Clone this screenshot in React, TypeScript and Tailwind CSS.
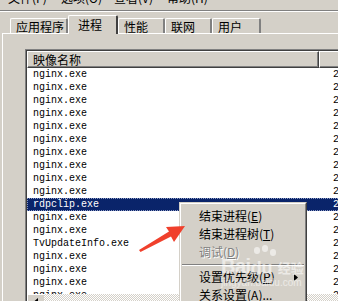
import React from 'react';

const ROWS = [
  'nginx.exe', 'nginx.exe', 'nginx.exe', 'nginx.exe', 'nginx.exe',
  'nginx.exe', 'nginx.exe', 'nginx.exe', 'nginx.exe', 'nginx.exe',
  'rdpclip.exe', 'nginx.exe', 'nginx.exe', 'TvUpdateInfo.exe',
  'nginx.exe', 'nginx.exe', 'nginx.exe', 'nginx.exe',
];

const PIDS = ['2748', '2836', '2904', '2212', '2380', '2456', '2520', '2612', '2688', '2764', '2096', '2840', '2916', '2188', '2264', '2340', '2412', '2496'];

const MENU = ['文件(F)', '选项(O)', '查看(V)', '帮助(H)'];

const TABS = [
  { label: '应用程序', w: 'w-[58px]' },
  { label: '进程', w: 'w-[50px]', active: true },
  { label: '性能', w: 'w-[47px]' },
  { label: '联网', w: 'w-[47px]' },
  { label: '用户', w: 'w-[49px]' },
];

function MenuItem({ text, mn, rest, disabled, sub }: { text: string; mn: string; rest?: string; disabled?: boolean; sub?: boolean }) {
  return (
    <div className={`h-[18px] flex items-center justify-between pl-[18px] pr-[7px] leading-[18px] ${disabled ? 'text-[#808080] [text-shadow:1px_1px_0_#fff]' : 'text-black'}`}>
      <span>
        {text}(<span className="underline underline-offset-1">{mn}</span>){rest}
      </span>
      {sub && (
        <svg width="4" height="7" viewBox="0 0 4 7">
          <path d="M0 0L4 3.5L0 7Z" fill="#000" />
        </svg>
      )}
    </div>
  );
}

export default function App() {
  return (
    <div className="w-[338px] h-[301px] overflow-hidden bg-[#d4d0c8] relative font-['Noto_Sans_CJK_SC','Noto_Sans',sans-serif] text-[12px] text-black">
      {/* menu bar, cut at the top */}
      <div className="h-[10px] overflow-hidden">
        <div className="flex pl-[8px] -mt-[8px] leading-[12px]">
          {MENU.map(m => (
            <span key={m} className="w-[53px] shrink-0">{m}</span>
          ))}
        </div>
      </div>
      <div className="border-t border-[#808080]" />
      <div className="border-t border-white" />

      {/* tabs */}
      <div className="h-[21px] flex items-end pl-[10px]">
        {TABS.map(t =>
          t.active ? (
            <div
              key={t.label}
              className={`${t.w} h-[19px] -mb-px relative z-10 bg-[#d4d0c8] border-t border-l border-white border-r-2 border-r-[#404040] rounded-t-[2px] pl-[9px] leading-[15px] pt-[1px] shrink-0`}
            >
              {t.label}
            </div>
          ) : (
            <div
              key={t.label}
              className={`${t.w} h-[15px] border-t border-l border-white border-r-2 border-r-[#808080] rounded-t-[2px] pl-[5px] leading-[16px] shrink-0`}
            >
              {t.label}
            </div>
          ),
        )}
      </div>

      {/* tab panel */}
      <div className="ml-[2px] border-t border-l border-white pl-[22px] pt-[15px]">
        <div className="border-t border-l border-[#808080]">
          <div className="border-t border-l border-[#404040] bg-white w-[400px]">
            {/* header */}
            <div className="h-[17px] flex bg-[#d4d0c8] leading-[15px]">
              <div className="w-[292px] shrink-0 border-t border-l border-white border-b border-b-[#404040] border-r border-r-[#404040] shadow-[inset_-1px_-1px_0_#808080] pl-[5px]">
                映像名称
              </div>
              <div className="flex-1 border-t border-l border-white border-b border-b-[#404040] shadow-[inset_0_-1px_0_#808080] pl-[24px]">
                用户名
              </div>
            </div>
            {/* rows */}
            <div className="h-[226px] overflow-hidden font-['Liberation_Mono',monospace] text-[10px]">
              {ROWS.map((r, i) => {
                const sel = i === 10;
                return (
                  <div
                    key={i}
                    className={`h-[13px] leading-[13px] flex ${sel ? 'bg-[#0a246a] text-white outline outline-1 outline-dotted outline-[#8c9ac4] -outline-offset-1' : 'text-black'}`}
                  >
                    <div className="w-[292px] shrink-0 pl-[6px]">{r}</div>
                    <div className="pl-[14px]">{PIDS[i]}</div>
                  </div>
                );
              })}
            </div>
            {/* horizontal scrollbar */}
            <div className="h-[17px] flex bg-[#d4d0c8]">
              <div className="w-[17px] shrink-0 border-t border-l border-white bg-[#d4d0c8] flex justify-center pt-[3px]">
                <svg width="4" height="7" viewBox="0 0 4 7">
                  <path d="M4 0L0 3.5L4 7Z" fill="#000" />
                </svg>
              </div>
              <div className="flex-1 bg-[repeating-conic-gradient(#d4d0c8_0_25%,#ffffff_0_50%)] bg-[length:2px_2px]" />
            </div>
          </div>
        </div>
      </div>

      {/* context menu */}
      <div className="absolute left-[179px] top-[202px] w-[128px] h-[110px] border border-t-[#d4d0c8] border-l-[#d4d0c8] border-r-[#404040] border-b-[#404040] bg-[#d4d0c8] z-10">
        <div className="h-full border border-t-white border-l-white border-r-[#808080] border-b-[#808080] pt-[3px]">
          <MenuItem text="结束进程" mn="E" />
          <MenuItem text="结束进程树" mn="T" />
          <MenuItem text="调试" mn="D" disabled />
          <div className="h-[7px] flex flex-col justify-center px-[1px]">
            <div className="border-t border-[#808080]" />
            <div className="border-t border-white" />
          </div>
          <MenuItem text="设置优先级" mn="P" sub />
          <MenuItem text="关系设置" mn="A" rest="..." />
        </div>
      </div>

      {/* watermark */}
      <div className="absolute left-[221px] top-[245px] z-20 pointer-events-none text-white/55 select-none">
        <div className="flex items-end leading-none">
          <span className="font-['Liberation_Sans',sans-serif] font-bold text-[20px] tracking-[-0.5px]">Bai</span>
          <span className="relative w-[26px] h-[31px]">
            <span className="absolute left-[3px] top-[2px] w-[6px] h-[7px] rounded-full bg-white/55" />
            <span className="absolute left-[11px] top-[0px] w-[6px] h-[7px] rounded-full bg-white/55" />
            <span className="absolute left-[19px] top-[4px] w-[6px] h-[7px] rounded-full bg-white/55" />
            <span className="absolute left-[0px] top-[14px] font-['Liberation_Sans',sans-serif] font-bold text-[18px]">du</span>
          </span>
          <span className="text-[13px] font-bold ml-[1px] mb-[2px]">经验</span>
        </div>
        <div className="font-['Liberation_Sans',sans-serif] text-[10px] leading-none mt-[2px]">jingyan.baidu.com</div>
      </div>

      {/* red annotation arrow */}
      <svg className="absolute left-0 top-0 z-30 pointer-events-none" width="338" height="301" viewBox="0 0 338 301">
        <polygon points="139,250 169,231.5 166,227 185,226 174,242 171,236.5 140.5,252" fill="#f0402c" />
      </svg>
    </div>
  );
}
